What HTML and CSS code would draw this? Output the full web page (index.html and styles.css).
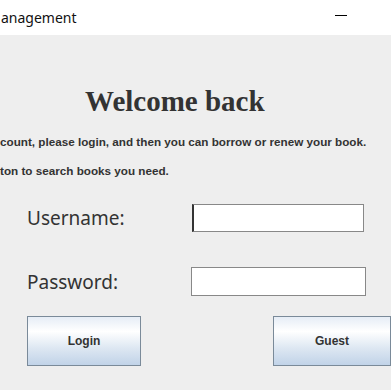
FILE: index.html
```html
<!DOCTYPE html>
<html lang="en">
<head>
  <meta charset="UTF-8" />
  <meta name="viewport" content="width=device-width, initial-scale=1.0" />
  <title>Library Management</title>
  <link rel="stylesheet" href="styles.css">
</head>
<body>
  <div class="titlebar">
    <span class="title">anagement</span>
    <span class="minimize"></span>
  </div>

  <div class="content">
    <h1>Welcome back</h1>
    <p class="hint first">count, please login, and then you can borrow or renew your book.</p>
    <p class="hint">ton to search books you need.</p>

    <div class="field first-field">
      <label for="username">Username:</label>
      <input id="username" class="user-input" type="text" />
    </div>
    <div class="field">
      <label for="password">Password:</label>
      <input id="password" class="pass-input" type="password" />
    </div>

    <div class="buttons">
      <button class="login">Login</button>
      <button class="guest">Guest</button>
    </div>
  </div>
</body>
</html>
```

FILE: styles.css
```css
body {
  margin: 0;
  background-color: #eeeeee;
  color: #333;
  overflow: hidden;
}
.titlebar {
  height: 35px;
  background-color: #fff;
  display: flex;
  align-items: center;
  justify-content: space-between;
}
.title {
  font-family: "Noto Sans", sans-serif;
  font-size: 14px;
  color: #111;
  padding-left: 1px;
}
.minimize {
  width: 12px;
  height: 1px;
  background-color: #000;
  margin-right: 44px;
  margin-bottom: 4px;
}
.content {
  padding-top: 50px;
}
h1 {
  font-family: "Liberation Serif", serif;
  font-size: 29px;
  line-height: 32px;
  margin: 0 0 0 85px;
  color: #333;
}
.hint {
  font-family: "Liberation Sans", Arial, sans-serif;
  font-weight: bold;
  font-size: 11.7px;
  line-height: 14px;
  margin: 15px 0 0 0;
  color: #333;
}
.hint.first {
  margin-top: 18px;
}
.field {
  display: flex;
  align-items: center;
  height: 29px;
  margin-top: 35px;
}
.field.first-field {
  margin-top: 25px;
}
label {
  font-family: "Noto Sans", sans-serif;
  font-size: 19px;
  color: #333;
  width: 165px;
  padding-left: 27px;
}
input {
  box-sizing: border-box;
  height: 28px;
  border: 1px solid #888;
  background-color: #fff;
  margin: 0;
  padding: 0 0 0 2px;
  outline: none;
}
.user-input {
  width: 172px;
  border-left: 2px solid #333;
}
.pass-input {
  width: 175px;
  height: 29px;
  margin-left: -1px;
}
.buttons {
  display: flex;
  justify-content: space-between;
  margin-top: 20px;
  padding-left: 27px;
}
button {
  box-sizing: border-box;
  height: 50px;
  border: 1px solid #7a8a99;
  border-radius: 0;
  background: linear-gradient(to bottom, #e6edf6 0%, #ffffff 30%, #dde7f2 65%, #c1d3e8 100%);
  font-family: "Liberation Sans", Arial, sans-serif;
  font-weight: bold;
  font-size: 12px;
  color: #333;
  padding: 0;
}
.login {
  width: 114px;
}
.guest {
  width: 118px;
}
```
